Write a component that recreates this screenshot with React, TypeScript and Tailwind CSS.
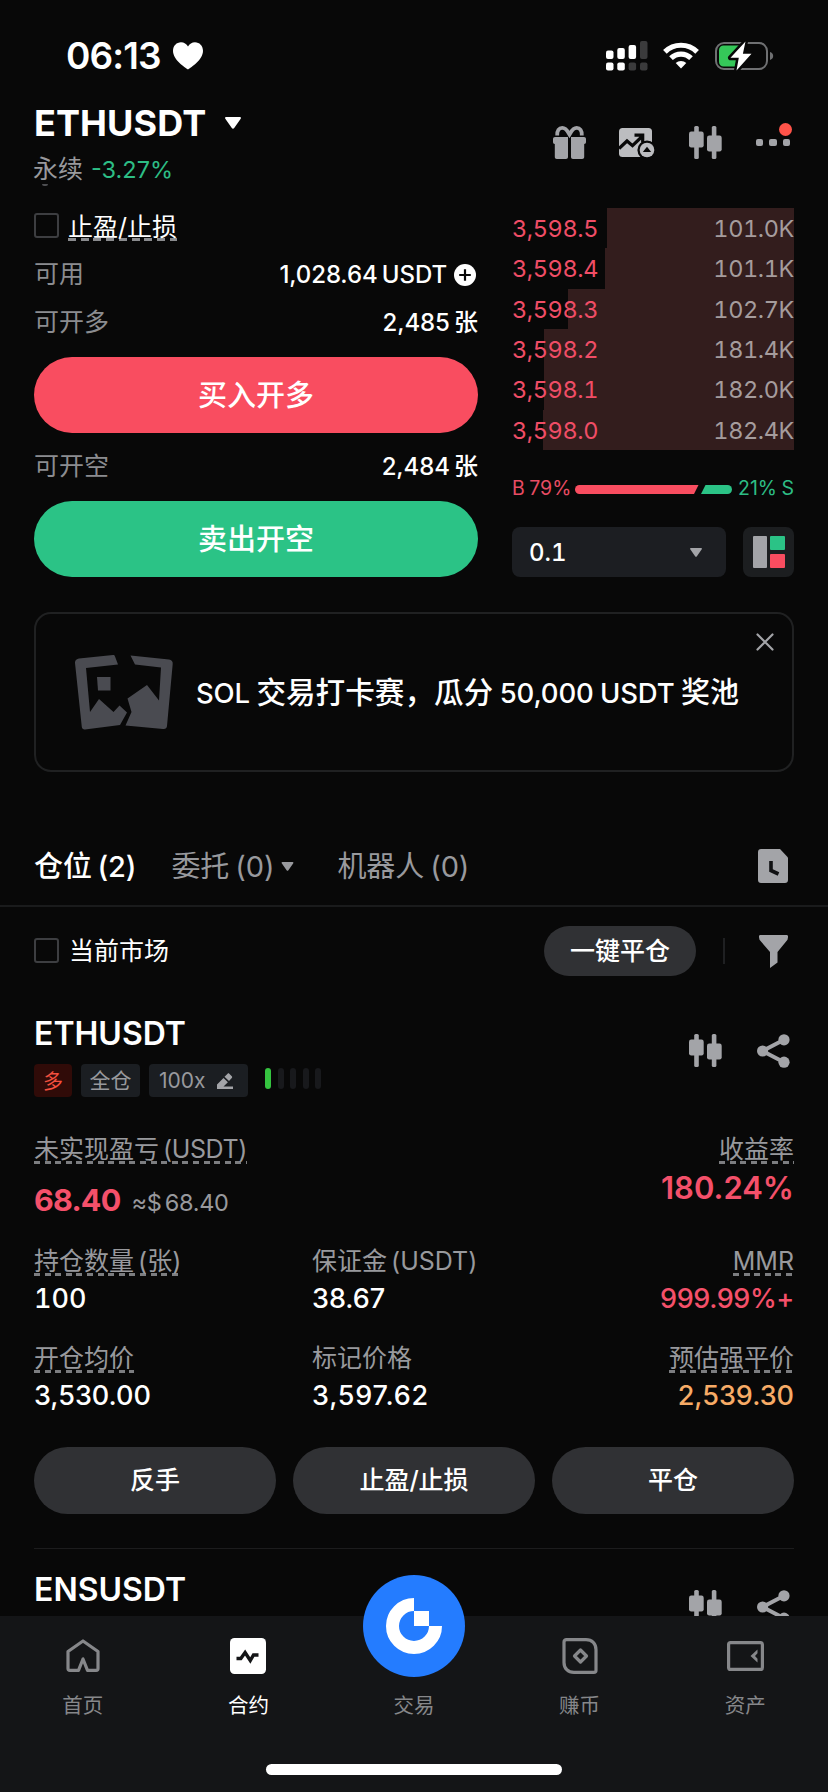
import type { ReactNode } from "react";
import clsx from "clsx";

const asks = [
  { price: "3,598.5", amount: "101.0K", depth: 187 },
  { price: "3,598.4", amount: "101.1K", depth: 189 },
  { price: "3,598.3", amount: "102.7K", depth: 226 },
  { price: "3,598.2", amount: "181.4K", depth: 250 },
  { price: "3,598.1", amount: "182.0K", depth: 250.5 },
  { price: "3,598.0", amount: "182.4K", depth: 251 },
];

function Caret({ className }: { className: string }) {
  return (
    <svg viewBox="0 0 16 12" className={className} fill="currentColor">
      <path d="M1.2 0h13.6c1 0 1.5 1 .9 1.8L9.2 11c-.6.9-1.8.9-2.4 0L.3 1.8C-.3 1 .2 0 1.2 0z" />
    </svg>
  );
}

function CandleIcon() {
  return (
    <svg viewBox="0 0 33 33" className="h-[33px] w-[33px] shrink-0" fill="#a3a4a8">
      <rect x="5.2" y="0" width="4.6" height="33" rx="1.5" />
      <rect x="0" y="5.5" width="14.7" height="16" rx="2.2" />
      <rect x="22.8" y="0" width="4.6" height="33" rx="1.5" />
      <rect x="18" y="9.5" width="14.7" height="16" rx="2.2" />
    </svg>
  );
}

function ShareIcon() {
  return (
    <svg viewBox="0 0 33 34" className="h-[34px] w-[33px] shrink-0" fill="#a3a4a8">
      <path d="M5.5 17 27 5.8M5.5 17 27 28.2" stroke="#a3a4a8" strokeWidth="4" />
      <circle cx="5.6" cy="17" r="5.6" />
      <circle cx="27" cy="5.8" r="5.6" />
      <circle cx="27" cy="28.2" r="5.6" />
    </svg>
  );
}

function Checkbox() {
  return <span className="h-[25px] w-[25px] shrink-0 rounded-[3px] border-2 border-[#3d3e41]" />;
}

function Dashed({ children }: { children: ReactNode }) {
  return (
    <span className="h-[30px] bg-[repeating-linear-gradient(90deg,#7c7d80_0_6px,transparent_6px_10.6px)] bg-[length:100%_3px] bg-bottom bg-no-repeat pt-px leading-[29px] whitespace-nowrap">
      {children}
    </span>
  );
}

function StatusBar() {
  return (
    <div className="flex h-[96px] items-center pt-[15px] pr-[54px] pl-[66px] text-white">
      <span className="w-[107px] text-[37px] font-semibold tracking-[-0.9px]">06:13</span>
      <svg viewBox="0 0 30 28" className="h-[28px] w-[30px]" fill="currentColor">
        <path d="M15 27.5C12 25.5 0 18 0 8.8 0 3.8 3.6.3 8 .3c3 0 5.6 1.6 7 4.2C16.4 1.9 19 .3 22 .3c4.4 0 8 3.5 8 8.5 0 9.2-12 16.7-15 18.7z" />
      </svg>
      <div className="ml-auto flex items-center">
        <svg viewBox="0 0 42 30" className="h-[30px] w-[42px]">
          <g fill="#fff">
            <rect x="0" y="9.5" width="7.5" height="8.5" rx="2" />
            <rect x="11.3" y="7" width="7.5" height="11" rx="2" />
            <rect x="22.6" y="4" width="7.5" height="14" rx="2" />
            <rect x="0" y="21.5" width="7.5" height="8" rx="2" />
            <rect x="11.3" y="21.5" width="7.5" height="8" rx="2" />
          </g>
          <g fill="#3b3b3c">
            <rect x="34" y="0" width="7.5" height="18" rx="2" />
            <rect x="22.6" y="21.5" width="7.5" height="8" rx="2" />
            <rect x="34" y="21.5" width="7.5" height="8" rx="2" />
          </g>
        </svg>
        <svg viewBox="0 0 36 27" className="ml-[15px] h-[27px] w-[36px]" fill="none" stroke="#fff" strokeWidth="5.2">
          <path d="M1.9 9.8a23 23 0 0 1 32.2 0" />
          <path d="M8 16.2a14.3 14.3 0 0 1 20 0" />
          <path d="M18 26.6l-5.3-5.5a7.6 7.6 0 0 1 10.6 0z" fill="#fff" stroke="none" />
        </svg>
        <svg viewBox="0 0 59 30" className="ml-[16px] h-[30px] w-[59px]">
          <rect x="1" y="2" width="51" height="26" rx="8" fill="none" stroke="#6f7072" strokeWidth="2" />
          <path d="M55 11v8c2-.6 3.2-2.2 3.2-4s-1.2-3.4-3.2-4z" fill="#6f7072" />
          <path d="M8.5 4.5H27v21H8.5c-2.5 0-4.5-2-4.5-4.5V9c0-2.5 2-4.5 4.500-4.500z" fill="#35c759" />
          <path
            d="M30.5.5 15.5 16.8h8.3L21.5 29.5l15-16.7h-8.6z"
            fill="#fff"
            stroke="#080808"
            strokeWidth="5"
            strokeLinejoin="round"
            paintOrder="stroke"
          />
        </svg>
      </div>
    </div>
  );
}

function Header() {
  return (
    <div className="flex h-[93px] items-center justify-between pr-[38px] pl-[34px]">
      <div className="h-full">
        <div className="flex h-[54px] items-center text-white">
          <span className="text-[36px] font-bold tracking-[0.1px]">ETHUSDT</span>
          <Caret className="ml-[19px] h-[12px] w-[16px]" />
        </div>
        <div className="-ml-px flex h-[35px] items-center gap-[8px] pt-[4px] text-[25px] text-[#98999d]">
          <span>永续</span>
          <span className="text-[23.5px] text-[#2dbd85]">-3.27%</span>
        </div>
        <div className="-mt-px ml-[8px] h-[2px] w-[6px] rounded-b-full bg-[#4e4f52]" />
      </div>
      <div className="flex items-center">
        <svg viewBox="0 0 33 33" className="h-[33px] w-[33px]" fill="#a3a4a8">
          <path
            d="M4.2 9.5C3.9 4.5 6 1.9 9.3 1.9c4 0 5.4 3.6 7.2 6.6 1.8-3 3.2-6.6 7.2-6.6 3.3 0 5.4 2.6 5.1 7.6"
            fill="none"
            stroke="#a3a4a8"
            strokeWidth="3.8"
          />
          <path d="M0 13c0-1.2.8-2 2-2h13v20c0 1-.8 2-2 2H3.8c-1.2 0-2-.8-2-2V18C.6 18 0 17 0 16z" />
          <path d="M33 13c0-1.2-.8-2-2-2H18v20c0 1 .8 2 2 2h9.2c1.2 0 2-.8 2-2V18c1.2 0 1.8-1 1.8-2z" />
        </svg>
        <svg viewBox="0 0 36 30" className="ml-[33px] h-[30px] w-[36px]">
          <rect x="0" y="0" width="33" height="29" rx="3.5" fill="#bcbdc0" />
          <path d="M0 20.5l8-7.5 5.5 4.7L22.5 9M15.5 7.2h8.2v7.5" fill="none" stroke="#080808" strokeWidth="3.2" />
          <circle cx="28" cy="22" r="9.6" fill="#080808" />
          <circle cx="28" cy="22" r="7.3" fill="#bcbdc0" />
          <path d="M28 18.8l4.2 5.2h-8.4z" fill="#080808" />
        </svg>
        <span className="ml-[34px]">
          <CandleIcon />
        </span>
        <div className="relative ml-[34px] flex gap-[6px]">
          <span className="h-[7.5px] w-[7.5px] rounded-[2px] bg-[#a3a4a8]" />
          <span className="h-[7.5px] w-[7.5px] rounded-[2px] bg-[#a3a4a8]" />
          <span className="h-[7.5px] w-[7.5px] rounded-[2px] bg-[#a3a4a8]" />
          <span className="absolute -top-[16px] -right-[2px] h-[13px] w-[13px] rounded-full bg-[#ff5349]" />
        </div>
      </div>
    </div>
  );
}

function OrderForm() {
  return (
    <div className="w-[444px] [word-spacing:-2px]">
      <div className="flex h-[48px] items-center">
        <Checkbox />
        <span className="mt-px ml-[9px] h-[30px] bg-[repeating-linear-gradient(90deg,#8a8b8e_0_8px,transparent_8px_12.75px)] bg-[length:100%_3px] bg-bottom bg-no-repeat pt-[2px] text-[25px] leading-[28px] text-white">
          止盈/止损
        </span>
      </div>
      <div className="flex h-[50px] items-center justify-between pt-[2px]">
        <span className="text-[25px] text-[#8b8c90]">可用</span>
        <span className="flex items-center text-[24px] font-medium tracking-[-0.1px] text-white">
          1,028.64 USDT
          <svg viewBox="0 0 22 22" className="mr-[2px] ml-[7px] h-[22px] w-[22px]">
            <circle cx="11" cy="11" r="11" fill="#fff" />
            <path d="M11 5.2v11.6M5.2 11h11.6" stroke="#080808" strokeWidth="2.2" />
          </svg>
        </span>
      </div>
      <div className="flex h-[46px] items-center justify-between pt-[2px]">
        <span className="text-[25px] text-[#8b8c90]">可开多</span>
        <span className="text-[24px] font-medium tracking-[-0.1px] text-white">2,485 张</span>
      </div>
      <button className="mt-[12px] flex h-[76px] w-full items-center justify-center rounded-full bg-[#f94d60] pt-px text-[29px] font-medium text-white">
        买入开多
      </button>
      <div className="mt-[10px] flex h-[46px] items-center justify-between pt-[2px]">
        <span className="text-[25px] text-[#8b8c90]">可开空</span>
        <span className="text-[24px] font-medium tracking-[-0.1px] text-white">2,484 张</span>
      </div>
      <button className="mt-[12px] flex h-[76px] w-full items-center justify-center rounded-full bg-[#2bc386] pt-px text-[29px] font-medium text-white">
        卖出开空
      </button>
    </div>
  );
}

function OrderBook() {
  return (
    <div className="mt-[7px] w-[282px]">
      <div className="grid h-[242px] grid-rows-6 tabular-nums">
        {asks.map((row) => (
          <div key={row.price} className="relative flex items-center justify-between pt-px text-[23.5px] tracking-[-0.4px]">
            <div className="absolute inset-y-0 right-0 bg-[#331d1d]" style={{ width: row.depth }} />
            <span className="relative text-[#f04d66]">{row.price}</span>
            <span className="relative text-[#a59c9d]">{row.amount}</span>
          </div>
        ))}
      </div>
      <div className="mt-[27px] flex h-[24px] items-center text-[19.5px] [word-spacing:-1px]">
        <span className="w-[63px] text-[#e94c64]">B 79%</span>
        <svg viewBox="0 0 157 9" className="h-[9px] w-[157px]">
          <path d="M4.5 0H123.5L119 9H4.5a4.5 4.5 0 0 1 0-9z" fill="#f94d60" />
          <path d="M130.5 0H152.5a4.5 4.5 0 0 1 0 9H126z" fill="#2bc386" />
        </svg>
        <span className="ml-auto whitespace-nowrap text-[#2dbd85]">21% S</span>
      </div>
      <div className="mt-[26px] flex h-[50px] justify-between">
        <div className="flex w-[214px] items-center justify-between rounded-[8px] bg-[#1c1e22] pr-[24px] pl-[17px] text-white">
          <span className="pt-[2px] text-[24px] font-medium tabular-nums">0.1</span>
          <Caret className="h-[9px] w-[12px] text-[#a3a4a8]" />
        </div>
        <div className="flex w-[51px] items-center justify-center gap-[3px] rounded-[8px] bg-[#1c1e20]">
          <span className="h-[32px] w-[14px] rounded-[1px] bg-[#a3a4a8]" />
          <span className="flex h-[32px] w-[15px] flex-col justify-between">
            <span className="h-[14px] rounded-[1px] bg-[#2bc386]" />
            <span className="h-[14px] rounded-[1px] bg-[#f94d60]" />
          </span>
        </div>
      </div>
    </div>
  );
}

function Banner() {
  return (
    <div className="relative mx-[34px] mt-[35px] flex h-[160px] items-center rounded-[17px] border-2 border-[#202122] pl-[39px]">
      <svg viewBox="0 0 98 75" className="h-[75px] w-[98px] shrink-0" fill="#4a4b51">
        <path d="M4 3.5 38 0c1 0 1.7.5 2 1.4L43 9.5 11 13l4 44 9-13 14.5 13 6-6.5 7.5 7-7 12.5L10 74.5c-1.7.2-3-.8-3.2-2.5L0 8c-.2-2.5 1.5-4.2 4-4.5z" />
        <path d="M22 22h13.5v13.5H23z" />
        <path d="M55.5.5 94 4.5c2.6.3 4 2 3.7 4.5l-5.7 62c-.2 2.2-1.6 3.3-4 3L50.5 70.5l6-13.5-4-13.500L72 30l12 15.500 2-33L60 9.500z" />
      </svg>
      <span className="ml-[23px] pt-px text-[27.5px] font-medium tracking-[-0.2px] whitespace-nowrap text-white [word-spacing:-0.5px]">
        SOL <span className="text-[29.6px] tracking-normal">交易打卡赛，瓜分</span> 50,000 USDT{" "}
        <span className="text-[29px] tracking-normal">奖池</span>
      </span>
      <svg viewBox="0 0 18 18" className="absolute top-[19px] right-[18px] h-[18px] w-[18px]">
        <path d="M1.5 1.5l15 15M16.5 1.5l-15 15" stroke="#a3a4a8" strokeWidth="2.2" strokeLinecap="round" />
      </svg>
    </div>
  );
}

function Tabs() {
  return (
    <div className="mt-[53px] flex h-[82px] items-center border-b-2 border-[#1a1b1c] px-[34px] text-[29px] text-[#98999d] [word-spacing:-2px]">
      <span className="pt-[3px] font-medium tracking-[-0.1px] text-white">仓位 (2)</span>
      <span className="ml-[35px] pt-[3px] tracking-[-0.1px]">委托 (0)</span>
      <Caret className="mt-[3px] ml-[7px] h-[9px] w-[13px]" />
      <span className="ml-[43px] pt-[3px] tracking-[-0.1px]">机器人 (0)</span>
      <svg viewBox="0 0 30 34" className="mt-[2px] mr-[6px] ml-auto h-[34px] w-[30px]">
        <path d="M3 0h19l8 8.5V31c0 1.8-1.2 3-3 3H3c-1.8 0-3-1.2-3-3V3c0-1.8 1.2-3 3-3z" fill="#a3a4a8" />
        <path d="M13 12v9.5l7.5 3.5" fill="none" stroke="#101113" strokeWidth="3.6" />
      </svg>
    </div>
  );
}

function FilterRow() {
  return (
    <div className="flex h-[87px] items-center px-[34px]">
      <Checkbox />
      <span className="ml-[10px] pt-[2px] text-[25px] text-white">当前市场</span>
      <button className="ml-auto flex h-[50px] w-[152px] items-center justify-center rounded-full bg-[#303134] pt-[2px] text-[25px] font-medium text-white">
        一键平仓
      </button>
      <span className="ml-[27px] h-[26px] w-[2px] bg-[#1f2022]" />
      <svg viewBox="0 0 29 33" className="mt-[2px] mr-[6px] ml-[34px] h-[33px] w-[29px]" fill="#a3a4a8">
        <path d="M1.5 0h26c1.3 0 1.8 1 1.5 2.2l-.5 2.6L18.5 17v10.5L11 33V17L.5 4.8 0 2.2C-.2 1 .3 0 1.5 0z" />
      </svg>
    </div>
  );
}

function PositionHeader({ symbol, children }: { symbol: string; children?: ReactNode }) {
  return (
    <div className="flex items-start justify-between">
      <div>
        <div className="flex h-[40px] items-center text-[32px] font-semibold text-white">{symbol}</div>
        {children}
      </div>
      <div className="mt-[20px] mr-[4px] flex gap-[35px]">
        <CandleIcon />
        <ShareIcon />
      </div>
    </div>
  );
}

type StatProps = {
  label: string;
  value: string;
  dashed?: boolean;
  align?: "start" | "end";
  valueClass?: string;
};

function Stat({ label, value, dashed, align = "start", valueClass = "text-white" }: StatProps) {
  return (
    <div className={clsx("flex flex-col", align === "end" ? "items-end" : "items-start")}>
      {dashed ? (
        <Dashed>{label}</Dashed>
      ) : (
        <span className="h-[30px] pt-px leading-[29px] whitespace-nowrap">{label}</span>
      )}
      <span className={clsx("mt-[3px] flex h-[40px] items-center text-[27px] font-medium", valueClass)}>{value}</span>
    </div>
  );
}

function Position() {
  return (
    <div className="mt-[20px] px-[34px] text-[25px] text-[#98999d] [word-spacing:-3px]">
      <PositionHeader symbol="ETHUSDT">
        <div className="mt-[10px] flex h-[33px] text-[21px]">
          <span className="flex w-[38px] items-center justify-center rounded-[4px] bg-[#300b08] pt-[2px] text-[20px] text-[#f4503f]">
            多
          </span>
          <span className="ml-[9px] flex w-[59px] items-center justify-center rounded-[4px] bg-[#1b1e22] pt-px">
            全仓
          </span>
          <span className="ml-[9px] flex w-[99px] items-center rounded-[4px] bg-[#1b1e22] pt-px pl-[10px]">
            100x
            <svg viewBox="0 0 16 16" className="ml-[11px] h-[16px] w-[16px]" fill="#a3a4a8">
              <path d="M0 16v-4.5l6.5-6.6 4.4 4.3L6.5 13.5H16V16zM7.5 3.8 10.6.7c.5-.5 1.2-.5 1.7 0l2.5 2.5c.5.5.5 1.2 0 1.7L12 8z" />
            </svg>
          </span>
          <span className="mt-[4px] ml-[17px] flex gap-[6.5px]">
            <span className="h-[21px] w-[6px] rounded-full bg-[#35c440]" />
            <span className="h-[21px] w-[6px] rounded-full bg-[#18191c]" />
            <span className="h-[21px] w-[6px] rounded-full bg-[#18191c]" />
            <span className="h-[21px] w-[6px] rounded-full bg-[#18191c]" />
            <span className="h-[21px] w-[6px] rounded-full bg-[#18191c]" />
          </span>
        </div>
      </PositionHeader>

      <div className="mt-[37px] flex h-[86px] justify-between">
        <div className="flex flex-col items-start">
          <Dashed>
            未实现盈亏 <span className="tracking-[-0.4px]">(USDT)</span>
          </Dashed>
          <div className="mt-[16px] flex h-[40px] items-baseline gap-[11px] leading-[40px]">
            <span className="text-[30.5px] font-bold tracking-[-0.8px] text-[#f4506a]">68.40</span>
            <span className="text-[23.5px] tracking-[-0.3px]">≈$ 68.40</span>
          </div>
        </div>
        <div className="flex flex-col items-end">
          <Dashed>收益率</Dashed>
          <span className="mt-[4px] text-[31px] leading-[40px] font-semibold text-[#f4506a]">180.24%</span>
        </div>
      </div>

      <div className="mt-[26px] grid grid-cols-[278px_1fr_1fr] gap-y-[24px]">
        <Stat label="持仓数量 (张)" value="100" dashed valueClass="text-white tabular-nums" />
        <Stat label="保证金 (USDT)" value="38.67" />
        <Stat label="MMR" value="999.99%+" dashed align="end" valueClass="text-[#f4506a] tracking-[-0.4px]" />
        <Stat label="开仓均价" value="3,530.00" dashed />
        <Stat label="标记价格" value="3,597.62" valueClass="text-white tracking-[0.8px]" />
        <Stat label="预估强平价" value="2,539.30" dashed align="end" valueClass="text-[#f7ab66]" />
      </div>

      <div className="mt-[31px] grid grid-cols-3 gap-[17px] font-medium text-white">
        <button className="h-[67px] rounded-full bg-[#303134]">反手</button>
        <button className="h-[67px] rounded-full bg-[#303134]">止盈/止损</button>
        <button className="h-[67px] rounded-full bg-[#303134]">平仓</button>
      </div>

      <div className="mt-[34px] mb-[21px] h-px bg-[#1c1c1d]" />
      <PositionHeader symbol="ENSUSDT" />
    </div>
  );
}

function NavItem({ label, active, children }: { label: string; active?: boolean; children?: ReactNode }) {
  return (
    <div className={clsx("flex flex-col items-center", active ? "text-white" : "text-[#86878a]")}>
      <div className="flex h-[80px] items-center justify-center">{children}</div>
      <span className="-mt-[5px] text-[20.5px] leading-[30px]">{label}</span>
    </div>
  );
}

function BottomNav() {
  return (
    <nav className="relative h-[176px] bg-[#141517]">
      <div className="grid grid-cols-5">
        <NavItem label="首页">
          <svg viewBox="0 0 36 36" className="h-[36px] w-[36px]" fill="none" stroke="currentColor" strokeWidth="3.2" strokeLinejoin="round">
            <path d="M18 3 33 13.5v17c0 1.2-.6 1.8-1.8 1.8h-8.700L18 21l-4.500 11.300H4.800c-1.200 0-1.800-.6-1.800-1.800v-17z" />
          </svg>
        </NavItem>
        <NavItem label="合约" active>
          <svg viewBox="0 0 36 36" className="h-[36px] w-[36px]">
            <rect width="36" height="36" rx="4.5" fill="#fff" />
            <path d="M6.5 20.5h4.3l4.3-6 5.2 8 3.2-5.5h5" fill="none" stroke="#141517" strokeWidth="3.4" />
          </svg>
        </NavItem>
        <NavItem label="交易" />
        <NavItem label="赚币">
          <svg viewBox="0 0 36 36" className="h-[36px] w-[36px]" fill="none" stroke="currentColor" strokeWidth="3.2" strokeLinejoin="round">
            <path d="M4.5 1.7H24c6 0 10 4 10 10v20.5c0 1.4-.8 2.2-2.2 2.2H12c-6 0-10-4-10-10V4c0-1.5 1-2.3 2.5-2.3z" />
            <path d="M18.5 12 24.5 18l-6 6-6-6z" />
          </svg>
        </NavItem>
        <NavItem label="资产">
          <svg viewBox="0 0 37 30" className="h-[30px] w-[37px]" fill="none" stroke="currentColor" strokeWidth="3.2">
            <rect x="1.6" y="1.6" width="33.8" height="26.8" rx="2" />
            <path d="M30.5 8.5v3.7L28 15l2.5 2.8v3.7L23.500 15z" fill="currentColor" stroke="none" />
          </svg>
        </NavItem>
      </div>
      <div className="absolute -top-[41px] left-1/2 -ml-[51px] flex h-[102px] w-[102px] items-center justify-center rounded-full bg-[#247cff]">
        <svg viewBox="0 0 56 56" className="h-[56px] w-[56px]">
          <path d="M28 6.5A21.5 21.5 0 1 0 49.5 28" fill="none" stroke="#fff" strokeWidth="13" />
          <rect x="28" y="13" width="15" height="15" fill="#fff" />
        </svg>
      </div>
      <div className="absolute bottom-[17px] left-1/2 h-[11px] w-[296px] -translate-x-1/2 rounded-full bg-white" />
    </nav>
  );
}

export default function App() {
  return (
    <div className="flex h-[1792px] w-[828px] flex-col overflow-hidden bg-[#080808] font-['Inter','Noto_Sans_CJK_SC',sans-serif]">
      <main className="h-[1616px] overflow-hidden">
        <StatusBar />
        <Header />
        <div className="mt-[12px] flex justify-between px-[34px]">
          <OrderForm />
          <OrderBook />
        </div>
        <Banner />
        <Tabs />
        <FilterRow />
        <Position />
      </main>
      <BottomNav />
    </div>
  );
}
